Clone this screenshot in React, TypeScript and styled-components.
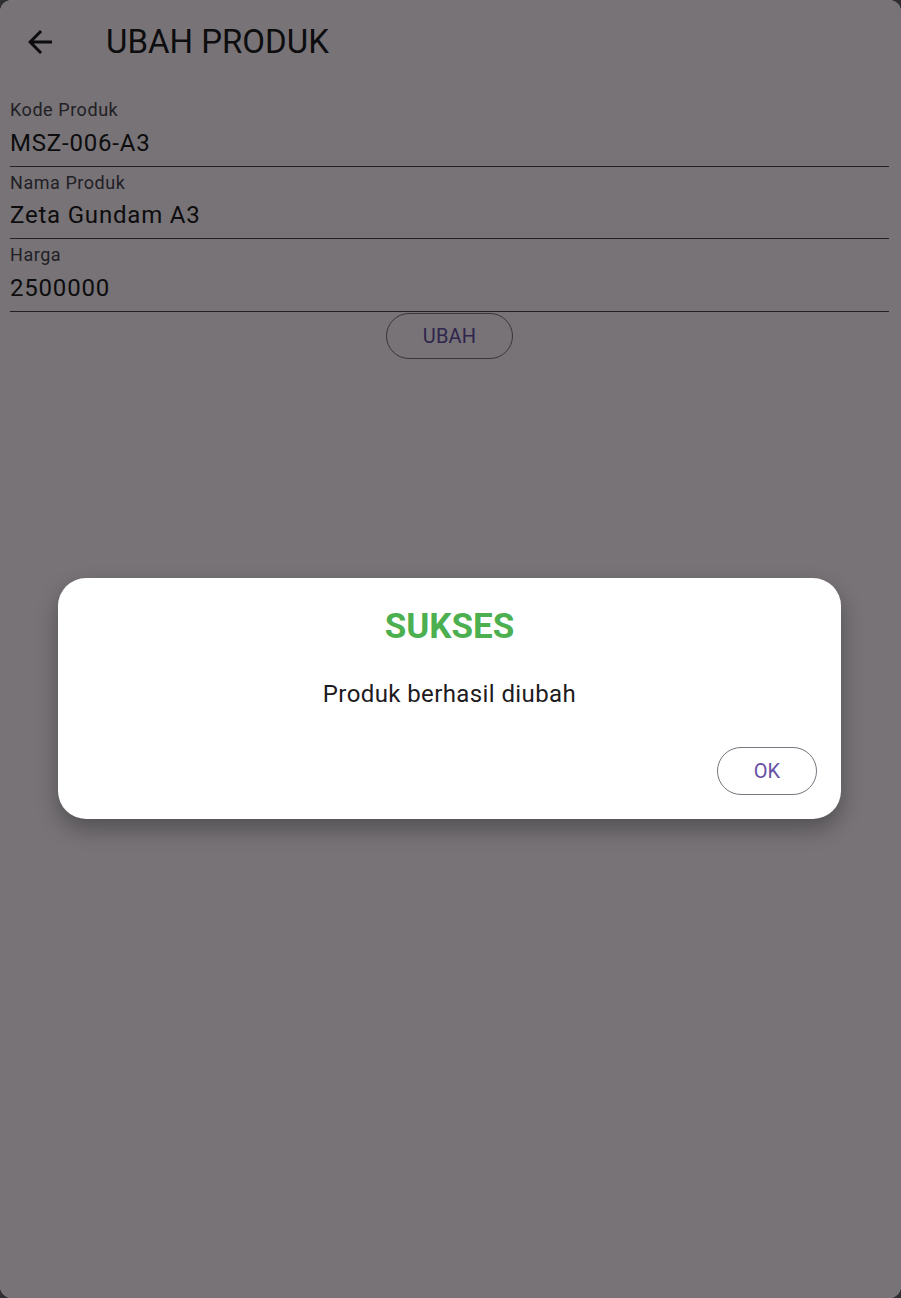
import React from "react";
import styled, { createGlobalStyle } from "styled-components";

const GlobalStyle = createGlobalStyle`
    html, body {
        margin: 0;
        padding: 0;
        background: #2f2e30;
    }
    body {
        font-family: Roboto, "Noto Sans", "Liberation Sans", sans-serif;
    }
    * {
        box-sizing: border-box;
    }
`;

const fields = [
    { label: "Kode Produk", value: "MSZ-006-A3" },
    { label: "Nama Produk", value: "Zeta Gundam A3" },
    { label: "Harga", value: "2500000" },
];

const App = () => {
    return (
        <>
            <GlobalStyle />
            <Screen>
                <AppBar>
                    <BackButton aria-label="Kembali">
                        <svg width="36" height="36" viewBox="0 0 24 24">
                            <path
                                d="M20 11H7.83l5.59-5.59L12 4l-8 8 8 8 1.41-1.41L7.83 13H20v-2z"
                                fill="currentColor"
                            />
                        </svg>
                    </BackButton>
                    <Title>UBAH PRODUK</Title>
                </AppBar>
                <Form>
                    {fields.map((f) => (
                        <Field key={f.label}>
                            <Label>{f.label}</Label>
                            <Value>{f.value}</Value>
                        </Field>
                    ))}
                    <ButtonRow>
                        <OutlineButton width={127} height={46}>
                            UBAH
                        </OutlineButton>
                    </ButtonRow>
                </Form>

                <Scrim>
                    <Dialog>
                        <DialogTitle>SUKSES</DialogTitle>
                        <DialogMessage>Produk berhasil diubah</DialogMessage>
                        <DialogActions>
                            <OutlineButton width={100} height={48}>
                                OK
                            </OutlineButton>
                        </DialogActions>
                    </Dialog>
                </Scrim>
            </Screen>
        </>
    );
};

export default App;

const Screen = styled.div`
    position: relative;
    width: 901px;
    height: 1298px;
    background: #fef7ff;
    border-radius: 12px;
    overflow: hidden;
    color: #1d1b20;
`;

const AppBar = styled.div`
    display: flex;
    align-items: center;
    height: 84px;
    padding-left: 22px;
`;

const BackButton = styled.div`
    display: flex;
    align-items: center;
    justify-content: center;
    width: 36px;
    height: 36px;
    color: #1d1b20;
`;

const Title = styled.div`
    margin-left: 48px;
    font-size: 33px;
    line-height: 40px;
    font-weight: 400;
    color: #1d1b20;
`;

const Form = styled.div`
    display: flex;
    flex-direction: column;
    padding: 10px 12px 0 10px;
`;

const Field = styled.div`
    display: flex;
    flex-direction: column;
    padding-top: 5px;
    border-bottom: 1px solid #49454f;
`;

const Label = styled.div`
    font-size: 18px;
    line-height: 22px;
    letter-spacing: 0.55px;
    color: #49454f;
`;

const Value = styled.div`
    margin-top: 5.5px;
    padding-bottom: 7px;
    font-size: 24px;
    line-height: 32px;
    letter-spacing: 0.8px;
    color: #1d1b20;
`;

const ButtonRow = styled.div`
    display: flex;
    justify-content: center;
    padding-top: 1px;
`;

const OutlineButton = styled.div<{ width: number; height: number }>`
    display: flex;
    align-items: center;
    justify-content: center;
    width: ${({ width }) => width}px;
    height: ${({ height }) => height}px;
    border: 1.4px solid #79747e;
    border-radius: 999px;
    font-size: 20px;
    letter-spacing: 0.2px;
    font-weight: 400;
    color: #6750a4;
`;

const Scrim = styled.div`
    position: absolute;
    inset: 0;
    display: flex;
    flex-direction: column;
    align-items: center;
    padding-top: 578px;
    padding-right: 2px;
    background: rgba(0, 0, 0, 0.535);
`;

const Dialog = styled.div`
    display: flex;
    flex-direction: column;
    width: 783px;
    height: 241px;
    padding: 29px 24px 24px;
    background: #ffffff;
    border-radius: 28px;
    box-shadow: 0 10px 22px rgba(0, 0, 0, 0.3);
`;

const DialogTitle = styled.div`
    text-align: center;
    font-size: 35px;
    line-height: 40px;
    font-weight: 700;
    letter-spacing: 0;
    color: #4caf50;
`;

const DialogMessage = styled.div`
    margin-top: 32px;
    text-align: center;
    font-size: 24px;
    line-height: 30px;
    letter-spacing: 0.4px;
    color: #1d1b20;
`;

const DialogActions = styled.div`
    display: flex;
    justify-content: flex-end;
    margin-top: auto;
`;
